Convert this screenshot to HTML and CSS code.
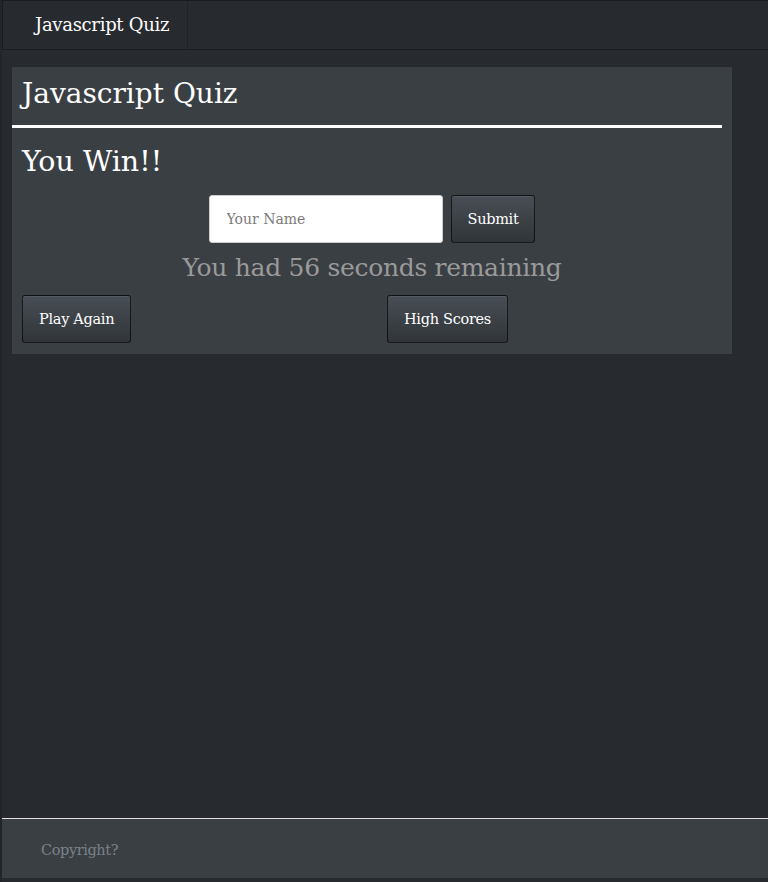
FILE: index.html
```html
<!DOCTYPE html>
<html lang="en">
<head>
<meta charset="utf-8">
<title>Javascript Quiz</title>
<link rel="stylesheet" href="styles.css">
</head>
<body>
<div class="page">
  <nav class="navbar">
    <a class="brand" href="#">Javascript Quiz</a>
  </nav>
  <main class="main">
    <section class="card">
      <h1 class="title">Javascript Quiz</h1>
      <hr class="rule">
      <h2 class="win">You Win!!</h2>
      <form class="score-form">
        <input class="name-input" type="text" placeholder="Your Name">
        <button class="btn" type="button">Submit</button>
      </form>
      <p class="remaining">You had 56 seconds remaining</p>
      <div class="actions">
        <div class="col"><button class="btn" type="button">Play Again</button></div>
        <div class="col"><button class="btn" type="button">High Scores</button></div>
      </div>
    </section>
  </main>
  <footer class="footer">
    <span class="copy">Copyright?</span>
  </footer>
</div>
</body>
</html>
```

FILE: styles.css
```css
* { box-sizing: border-box; }
html, body { margin: 0; padding: 0; height: 100%; }
body {
  background: #272b30;
  font-family: "DejaVu Serif", "Liberation Serif", serif;
  color: #fff;
}
.page {
  min-height: 882px;
  display: flex;
  flex-direction: column;
  border-left: 2px solid #222529;
}
.navbar {
  height: 50px;
  display: flex;
  background: #272b30;
  border: 1px solid #1a1c1f;
  border-right: none;
}
.brand {
  display: flex;
  align-items: center;
  padding: 0 17.5px 2px 32px;
  border-right: 1px solid #1f2226;
  color: #fff;
  text-decoration: none;
  font-size: 18px;
  letter-spacing: -0.3px;
}
.main {
  flex: 1;
  padding: 17px 0 0 10px;
}
.card {
  width: 720px;
  background: #3a3f44;
  padding: 0 10px 11px;
}
.title {
  margin: 0;
  padding: 7px 0 0;
  height: 58px;
  font-weight: normal;
  font-size: 28px;
  line-height: 40px;
}
.rule {
  margin: 0 0 0 -10px;
  width: 710px;
  border: none;
  height: 3px;
  background: #fff;
}
.win {
  margin: 0;
  height: 67px;
  padding-top: 16px;
  font-weight: normal;
  font-size: 28.5px;
  line-height: 36px;
}
.score-form {
  display: flex;
  justify-content: center;
  gap: 8px;
  margin: 0;
}
.name-input {
  width: 234px;
  height: 48px;
  border: 1px solid #ccc;
  border-radius: 3px;
  background: #fff;
  padding: 0 17px;
  font-family: "DejaVu Serif", "Liberation Serif", serif;
  font-size: 14px;
  color: #555;
}
.name-input::placeholder { color: #7a7a7a; }
.btn {
  height: 48px;
  padding: 0 16px;
  border: 1px solid rgba(0,0,0,0.65);
  border-radius: 3px;
  background: linear-gradient(#484e55, #3a3f44 60%, #313539);
  color: #fff;
  font-family: "DejaVu Serif", "Liberation Serif", serif;
  font-size: 14.5px;
  letter-spacing: -0.3px;
  box-shadow: inset 0 1px 0 rgba(255,255,255,0.08);
}
.remaining {
  margin: 0;
  height: 52px;
  text-align: center;
  color: #9a9a9a;
  font-size: 25px;
  letter-spacing: -0.3px;
  line-height: 50px;
}
.actions {
  display: grid;
  grid-template-columns: 1fr 1fr;
  column-gap: 30px;
}
.footer {
  height: 60px;
  margin-bottom: 4px;
  background: #3a3f44;
  border-top: 1px solid #e0e0e0;
  display: flex;
  align-items: center;
  padding: 2px 0 0 39px;
}
.copy {
  color: #7a8288;
  font-size: 14.5px;
  letter-spacing: -0.4px;
}
```
